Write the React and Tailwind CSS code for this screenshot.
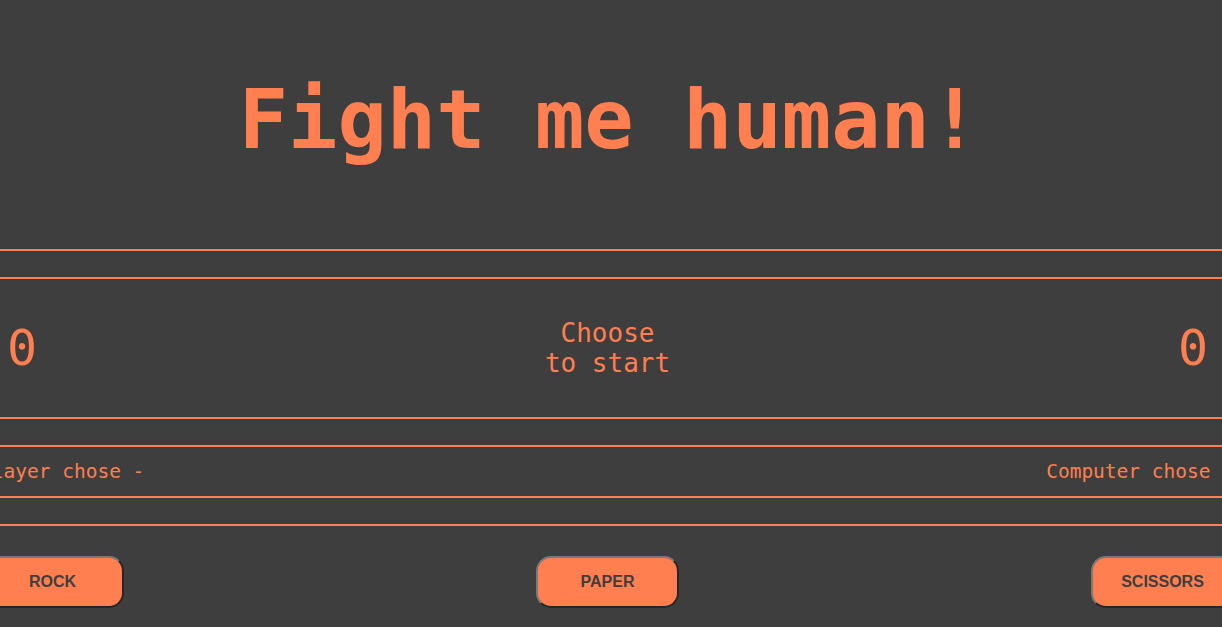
import React from 'react'

const mono = "font-['DejaVu_Sans_Mono',monospace]"

function Divider() {
  return <div className="h-[30px] border-y-2 border-[#ff7f50]" />
}

function ChoiceButton({ label }) {
  return (
    <button className="w-[143px] h-[52px] rounded-[15px] bg-[#ff7f50] border-2 border-t-[#7a7a7a] border-l-[#7a7a7a] border-b-[#262626] border-r-[#262626] text-[#3e3e3e] text-[16px] font-bold font-['Liberation_Sans',Arial,sans-serif]">
      {label}
    </button>
  )
}

export default function App() {
  return (
    <div className={`min-h-[627px] bg-[#3e3e3e] text-[#ff7f50] overflow-hidden ${mono}`}>
      <div className="h-[249px] pt-[79px] flex justify-center">
        <h1 className="text-[82px] leading-[82px] font-bold whitespace-nowrap pr-[4px]">Fight me human!</h1>
      </div>

      <Divider />

      <div className="h-[138px] flex items-center justify-between pl-[7px] pr-[14px]">
        <span className="text-[50px] leading-none">0</span>
        <div className="text-[26px] leading-[30px] text-center">
          <div>Choose</div>
          <div>to start</div>
        </div>
        <span className="text-[50px] leading-none">0</span>
      </div>

      <Divider />

      <div className="h-[49px] flex items-center">
        <div className="ml-[-20px] w-[1254px] shrink-0 flex justify-between text-[19.5px] leading-none whitespace-nowrap">
          <span>Player chose -</span>
          <span>Computer chose -</span>
        </div>
      </div>

      <Divider />

      <div className="pt-[30px] flex">
        <div className="ml-[-19px] w-[1253px] shrink-0 flex justify-between">
          <ChoiceButton label="ROCK" />
          <ChoiceButton label="PAPER" />
          <ChoiceButton label="SCISSORS" />
        </div>
      </div>
    </div>
  )
}
